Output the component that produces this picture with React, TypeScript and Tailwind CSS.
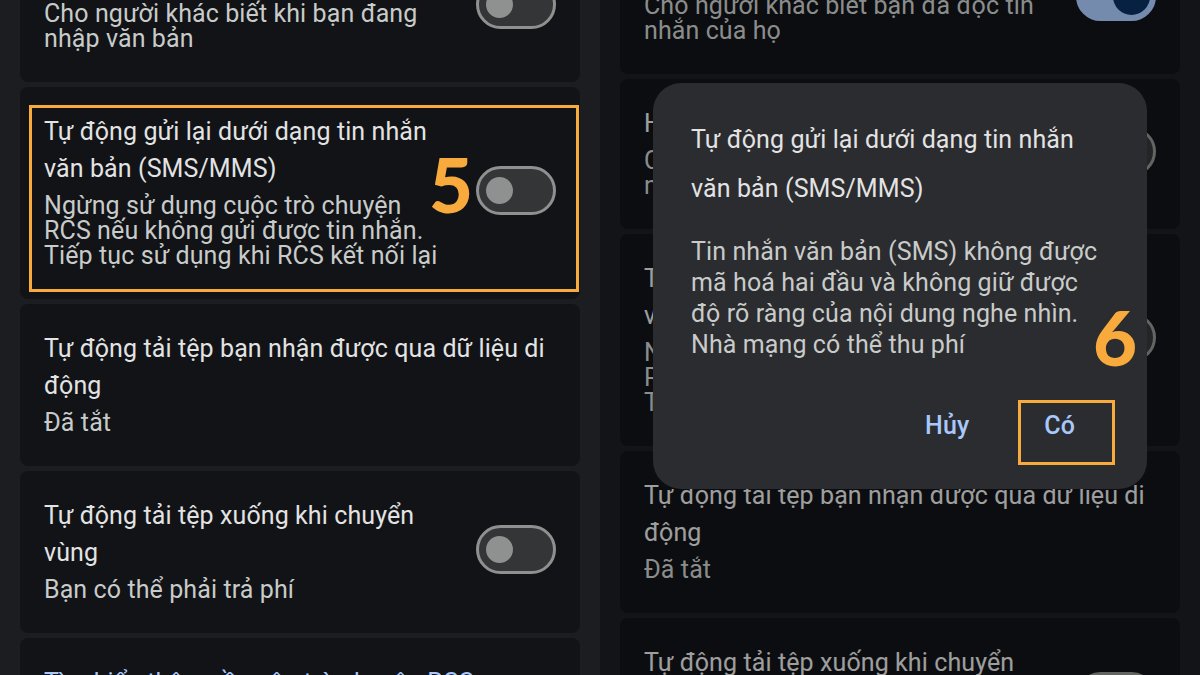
import React from "react";

type Row = {
  title: string[];
  sub?: string[];
  toggle?: "on" | "off";
  link?: boolean;
};

// Google Messages > RCS settings, same list shown in both phones
const rows: Row[] = [
  {
    title: ["Gửi thông báo đã đọc"],
    sub: ["Cho người khác biết bạn đã đọc tin", "nhắn của họ"],
    toggle: "on",
  },
  {
    title: ["Hiển thị chỉ báo đang nhập"],
    sub: ["Cho người khác biết khi bạn đang", "nhập văn bản"],
    toggle: "off",
  },
  {
    title: ["Tự động gửi lại dưới dạng tin nhắn", "văn bản (SMS/MMS)"],
    sub: [
      "Ngừng sử dụng cuộc trò chuyện",
      "RCS nếu không gửi được tin nhắn.",
      "Tiếp tục sử dụng khi RCS kết nối lại",
    ],
    toggle: "off",
  },
  {
    title: ["Tự động tải tệp bạn nhận được qua dữ liệu di", "động"],
    sub: ["Đã tắt"],
  },
  {
    title: ["Tự động tải tệp xuống khi chuyển", "vùng"],
    sub: ["Bạn có thể phải trả phí"],
    toggle: "off",
  },
  {
    title: ["Tìm hiểu thêm về cuộc trò chuyện RCS"],
    link: true,
  },
];

const Toggle = ({ on }: { on: boolean }) =>
  on ? (
    <div className="w-[80px] h-[49px] shrink-0 rounded-full bg-[#a8c7fa] flex items-center justify-end pr-[6px]">
      <div className="w-[37px] h-[37px] rounded-full bg-[#0b305f]" />
    </div>
  ) : (
    <div className="w-[80px] h-[49px] shrink-0 rounded-full border-[3px] border-[#8e918f] bg-[#333537] flex items-center pl-[7px]">
      <div className="w-[27px] h-[27px] rounded-full bg-[#8e918f]" />
    </div>
  );

const SettingCard = ({ row, children }: { row: Row; children?: React.ReactNode }) => (
  <div className="relative flex items-center gap-6 rounded-[8px] bg-[#111317] px-6 pt-[26px] pb-[31px]">
    <div className="flex-1 min-w-0 whitespace-nowrap">
      <div className={`text-[25px] leading-[37px] ${row.link ? "text-[#a8c7fa]" : "text-[#e3e3e3]"}`}>
        {row.title.map((line) => (
          <div key={line}>{line}</div>
        ))}
      </div>
      {row.sub && (
        <div className="mt-[6px] text-[25px] leading-[25px] text-[#c8cbc9]">
          {row.sub.map((line) => (
            <div key={line}>{line}</div>
          ))}
        </div>
      )}
    </div>
    {row.toggle && <Toggle on={row.toggle === "on"} />}
    {children}
  </div>
);

const Step = ({ n, className }: { n: string; className: string }) => (
  <span
    className={`absolute font-['Lato',sans-serif] font-black text-[76px] leading-none text-[#f8aa3c] ${className}`}
  >
    {n}
  </span>
);

export default function App() {
  return (
    <div className="w-[1200px] h-[675px] overflow-hidden flex font-['Roboto',sans-serif] tracking-[0.1px]">
      {/* Left phone */}
      <div className="w-[600px] h-full overflow-hidden bg-[#1c1d21] px-5">
        <div className="mt-[-68px] flex flex-col gap-[5px]">
          {rows.slice(1).map((row, i) => (
            <SettingCard key={i} row={row}>
              {i === 1 && (
                <>
                  <div className="absolute left-[9px] top-[18px] w-[550px] h-[187px] border-[3px] border-[#f8aa3c]" />
                  <Step n="5" className="left-[409px] top-[59px]" />
                </>
              )}
            </SettingCard>
          ))}
        </div>
      </div>

      {/* Right phone with confirm dialog */}
      <div className="relative w-[600px] h-full overflow-hidden bg-[#1c1d21] px-5">
        <div className="mt-[-76px] flex flex-col gap-[5px]">
          {rows.map((row, i) => (
            <SettingCard key={i} row={row} />
          ))}
        </div>
        <div className="absolute inset-0 bg-black/30" />

        <div className="absolute left-[53px] top-[83px] w-[494px] h-[406px] rounded-[28px] bg-[#2b2c2f] pl-[38px] pr-[30px] pt-[32px]">
          <div className="text-[25px] leading-[49px] text-[#e3e3e3] whitespace-nowrap">
            <div>Tự động gửi lại dưới dạng tin nhắn</div>
            <div>văn bản (SMS/MMS)</div>
          </div>
          <div className="mt-[23px] text-[25px] leading-[31px] text-[#c8cbc9] whitespace-nowrap">
            <div>Tin nhắn văn bản (SMS) không được</div>
            <div>mã hoá hai đầu và không giữ được</div>
            <div>độ rõ ràng của nội dung nghe nhìn.</div>
            <div>Nhà mạng có thể thu phí</div>
          </div>
          <div className="mt-[42px] flex justify-end gap-[39px] pr-[24px]">
            <button className="h-[48px] px-[18px] text-[25px] font-medium text-[#a8c7fa]">Hủy</button>
            <button className="h-[48px] px-[18px] text-[25px] font-medium text-[#a8c7fa]">Có</button>
          </div>

          <div className="absolute left-[365px] top-[317px] w-[97px] h-[65px] border-[3px] border-[#f8aa3c]" />
          <Step n="6" className="left-[440px] top-[216px]" />
        </div>
      </div>
    </div>
  );
}
